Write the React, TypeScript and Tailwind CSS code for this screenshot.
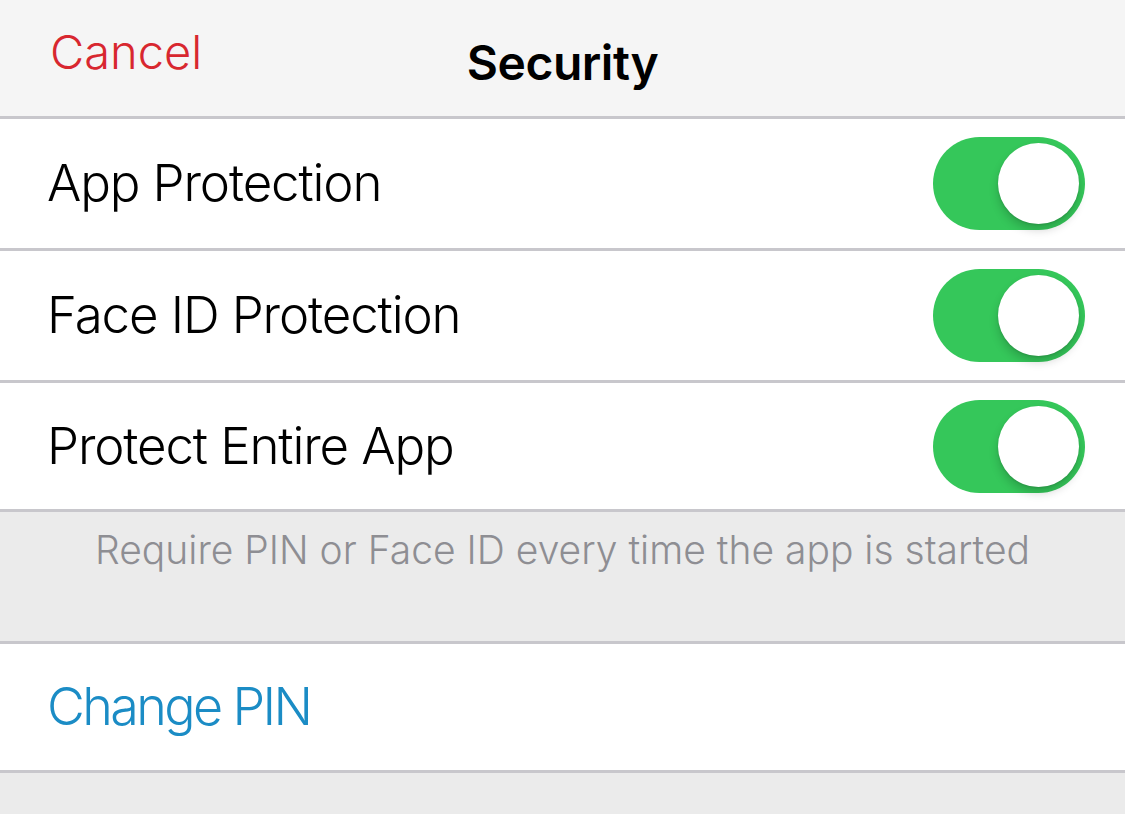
import { useState } from "react";

function Toggle({ on, onChange }: { on: boolean; onChange: () => void }) {
  return (
    <button
      onClick={onChange}
      className={`flex h-[93px] w-[152px] shrink-0 items-center rounded-full p-[6px] ${
        on ? "justify-end bg-[#35c75a]" : "justify-start bg-[#e5e5ea]"
      }`}
    >
      <span className="block h-[81px] w-[81px] rounded-full bg-white shadow-[0_6px_10px_rgba(0,0,0,0.18),0_1px_2px_rgba(0,0,0,0.12)]" />
    </button>
  );
}

function Row({ label, on, onChange, last }: { label: string; on: boolean; onChange: () => void; last?: boolean }) {
  return (
    <div className={`flex items-center justify-between pl-[47px] pr-[40px] ${last ? "h-[129px]" : "h-[132px]"} border-b-[3px] border-[#c8c7cc] bg-white`}>
      <span className="text-[51px] font-light tracking-[-0.022em] text-black">{label}</span>
      <Toggle on={on} onChange={onChange} />
    </div>
  );
}

export default function App() {
  const [app, setApp] = useState(true);
  const [face, setFace] = useState(true);
  const [entire, setEntire] = useState(true);

  return (
    <div className="min-h-[814px] bg-[#ebebeb] font-['Inter','Liberation_Sans',sans-serif]">
      <header className="grid h-[119px] grid-cols-[1fr_auto_1fr] border-b-[3px] border-[#c8c7cc] bg-[#f5f5f5]">
        <div className="pl-[50px] pt-[17px]">
          <button className="text-[47px] font-light text-[#d8272f]">Cancel</button>
        </div>
        <h1 className="pt-[27px] text-[48px] font-semibold tracking-[-0.01em] text-black">Security</h1>
        <div />
      </header>

      <Row label="App Protection" on={app} onChange={() => setApp(!app)} />
      <Row label="Face ID Protection" on={face} onChange={() => setFace(!face)} />
      <Row label="Protect Entire App" on={entire} onChange={() => setEntire(!entire)} last />

      <div className="h-[132px] border-b-[3px] border-[#c8c7cc] bg-[#ebebeb] pt-[9px] text-center">
        <p className="text-[39px] font-light text-[#8e8e93]">
          Require PIN or Face ID every time the app is started
        </p>
      </div>

      <div className="flex h-[129px] items-center border-b-[3px] border-[#c8c7cc] bg-white pl-[47px]">
        <button className="text-[52px] font-light tracking-[-0.05em] text-[#1b8cc5]">Change PIN</button>
      </div>
    </div>
  );
}
